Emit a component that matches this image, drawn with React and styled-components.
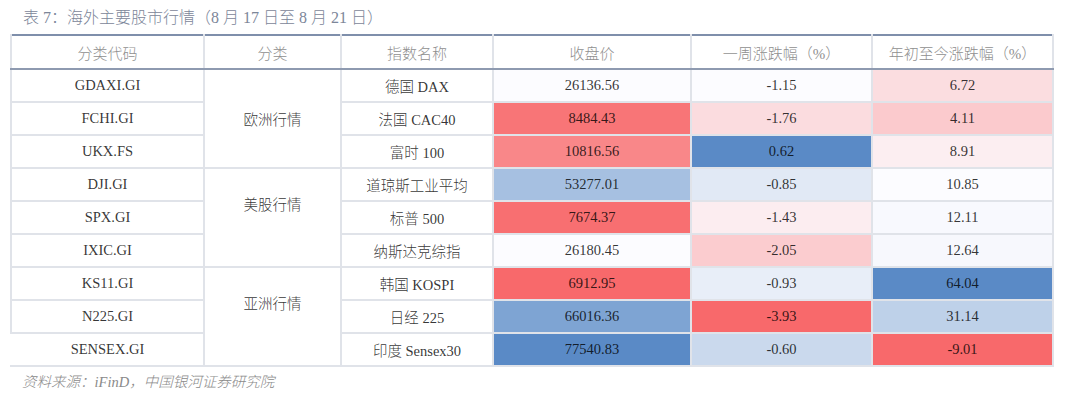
import React from 'react'
import styled, { createGlobalStyle } from 'styled-components'

const GlobalStyle = createGlobalStyle`
  body {
    margin: 0;
    background: #fff;
    font-family: "Liberation Serif", "Noto Sans CJK SC", serif;
    font-weight: 300;
  }
`

const Page = styled.div`
  width: 1042px;
  padding-left: 10px;
`

const Caption = styled.div`
  height: 34px;
  line-height: 36px;
  padding-left: 13px;
  font-size: 16px;
  color: #7c8699;
`

const Table = styled.table`
  width: 1042px;
  table-layout: fixed;
  border-collapse: collapse;
  border-top: 2px solid #7f8fab;
  border-bottom: 2px solid #8f97a5;
`

const HeadCell = styled.th`
  height: 32px;
  padding: 0;
  font-weight: 300;
  font-size: 15px;
  color: #8f8f8f;
  border-left: 2px solid #e0e3e9;
  border-right: 2px solid #e0e3e9;
  border-bottom: 2px solid #8e9ab0;
`

const Cell = styled.td`
  height: 31px;
  padding: 0 0 ${({ $lift }) => $lift || 0}px;
  text-align: center;
  font-size: 14.5px;
  color: rgba(0, 0, 0, 0.8);
  background: ${({ $bg }) => $bg || '#fff'};
  border: 2px solid #e0e3e9;
  border-left-color: ${({ $noLeft }) => $noLeft ? '#fff' : '#e0e3e9'};
`

const Source = styled.div`
  height: 30px;
  line-height: 30px;
  padding-left: 12px;
  font-size: 14.5px;
  font-style: italic;
  color: #8a8a8a;
`

const RED = [248, 105, 107]
const MID = [252, 252, 255]
const BLUE = [90, 138, 198]

const mix = (a, b, t) => `rgb(${a.map((v, i) => Math.round(v + (b[i] - v) * t)).join(',')})`

// excel style 3-colour scale, midpoint at the 50th percentile
const colourScale = (values) => {
  const sorted = [...values].sort((a, b) => a - b)
  const min = sorted[0]
  const max = sorted[sorted.length - 1]
  const med = sorted[Math.floor(sorted.length / 2)]
  return (v) => v <= med
    ? mix(MID, RED, (med - v) / (med - min))
    : mix(MID, BLUE, (v - med) / (max - med))
}

const rows = [
  ['GDAXI.GI', '德国 DAX', 26136.56, -1.15, 6.72],
  ['FCHI.GI', '法国 CAC40', 8484.43, -1.76, 4.11],
  ['UKX.FS', '富时 100', 10816.56, 0.62, 8.91],
  ['DJI.GI', '道琼斯工业平均', 53277.01, -0.85, 10.85],
  ['SPX.GI', '标普 500', 7674.37, -1.43, 12.11],
  ['IXIC.GI', '纳斯达克综指', 26180.45, -2.05, 12.64],
  ['KS11.GI', '韩国 KOSPI', 6912.95, -0.93, 64.04],
  ['N225.GI', '日经 225', 66016.36, -3.93, 31.14],
  ['SENSEX.GI', '印度 Sensex30', 77540.83, -0.60, -9.01]
]

const groups = {
  0: { name: '欧洲行情', lift: 0 },
  3: { name: '美股行情', lift: 29 },
  6: { name: '亚洲行情', lift: 29 }
}

const headers = ['分类代码', '分类', '指数名称', '收盘价', '一周涨跌幅（%）', '年初至今涨跌幅（%）']
const widths = [193, 137, 152, 198, 181, 181]

const scales = [2, 3, 4].map((col) => colourScale(rows.map((r) => r[col])))

const App = () => (
  <Page>
    <GlobalStyle />
    <Caption>表 7：海外主要股市行情（8 月 17 日至 8 月 21 日）</Caption>
    <Table>
      <colgroup>
        {widths.map((w, i) => <col key={i} style={{ width: w }} />)}
      </colgroup>
      <thead>
        <tr>
          {headers.map((h) => <HeadCell key={h}>{h}</HeadCell>)}
        </tr>
      </thead>
      <tbody>
        {rows.map((row, i) => (
          <tr key={row[0]}>
            <Cell $noLeft={i === rows.length - 1}>{row[0]}</Cell>
            {groups[i] && <Cell rowSpan={3} $lift={groups[i].lift}>{groups[i].name}</Cell>}
            <Cell>{row[1]}</Cell>
            {[2, 3, 4].map((col, k) => (
              <Cell key={col} $bg={scales[k](row[col])}>{row[col].toFixed(2)}</Cell>
            ))}
          </tr>
        ))}
      </tbody>
    </Table>
    <Source>资料来源：iFinD，中国银河证券研究院</Source>
  </Page>
)

export default App
